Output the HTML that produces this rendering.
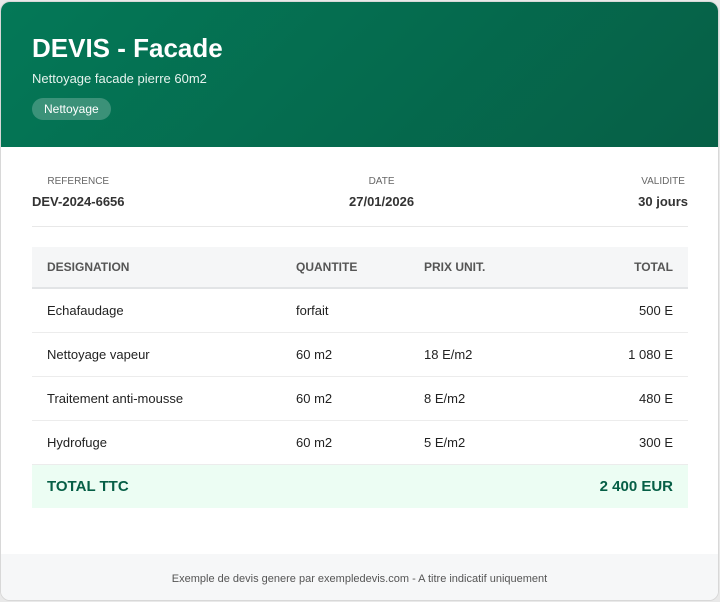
<!DOCTYPE html>
<html><head><meta charset="utf-8"><style>
*{margin:0;padding:0;box-sizing:border-box}
html,body{width:720px;height:602px;background:#e9e9e9;font-family:"Liberation Sans",sans-serif;overflow:hidden}
.card{position:absolute;left:0;top:1px;width:719px;height:600px;background:#fff;border:1px solid #d8d8d8;border-radius:10px;overflow:hidden}
.hdr{height:145px;background:linear-gradient(135deg,#047857,#065f46);padding:30px 31px;color:#fff}
.hdr h1{font-size:26px;font-weight:bold;line-height:32px}
.hdr .sub{font-size:13px;margin-top:7px;color:#e6f3ee}
.tag{display:inline-block;margin-top:12px;background:rgba(255,255,255,.22);border-radius:12px;padding:4px 12px;font-size:12px}
.meta{position:absolute;left:31px;top:168px;width:656px;height:57px;border-bottom:1px solid #e8e8e8}
.m{position:absolute;top:6px;font-size:10px;color:#666;text-transform:uppercase}
.m b{display:block;font-size:13px;color:#333;margin-top:7px;text-transform:none}
table{position:absolute;left:31px;top:245px;width:656px;border-collapse:collapse;font-size:13px;color:#222}
th{background:#f5f6f7;height:41px;font-size:12px;color:#555;text-align:left;padding:0 15px;border-bottom:2px solid #e2e4e6}
td{height:44px;padding:0 15px;border-bottom:1px solid #ececec}
.r{text-align:right}
tr.tot td{background:#ecfdf3;color:#065f46;font-weight:bold;font-size:15px;border:none}
.foot{position:absolute;left:0;bottom:0;width:100%;height:46px;background:#f6f7f8;font-size:11px;color:#555;text-align:center;line-height:50px}
</style></head><body>
<div class="card">
<div class="hdr"><h1>DEVIS - Facade</h1><div class="sub">Nettoyage facade pierre 60m2</div><div class="tag">Nettoyage</div></div>
<div class="meta">
<div class="m" style="left:0;text-align:center"><span style="display:block">Reference</span><b>DEV-2024-6656</b></div>
<div class="m" style="left:317px;text-align:center"><span style="display:block">Date</span><b>27/01/2026</b></div>
<div class="m" style="right:0;text-align:center"><span style="display:block">Validite</span><b>30 jours</b></div>
</div>
<table>
<tr><th style="width:249px">DESIGNATION</th><th style="width:128px">QUANTITE</th><th>PRIX UNIT.</th><th class="r">TOTAL</th></tr>
<tr><td>Echafaudage</td><td>forfait</td><td></td><td class="r">500 E</td></tr>
<tr><td>Nettoyage vapeur</td><td>60 m2</td><td>18 E/m2</td><td class="r">1 080 E</td></tr>
<tr><td>Traitement anti-mousse</td><td>60 m2</td><td>8 E/m2</td><td class="r">480 E</td></tr>
<tr><td>Hydrofuge</td><td>60 m2</td><td>5 E/m2</td><td class="r">300 E</td></tr>
<tr class="tot"><td>TOTAL TTC</td><td></td><td></td><td class="r">2 400 EUR</td></tr>
</table>
<div class="foot">Exemple de devis genere par exempledevis.com - A titre indicatif uniquement</div>
</div>
</body></html>
